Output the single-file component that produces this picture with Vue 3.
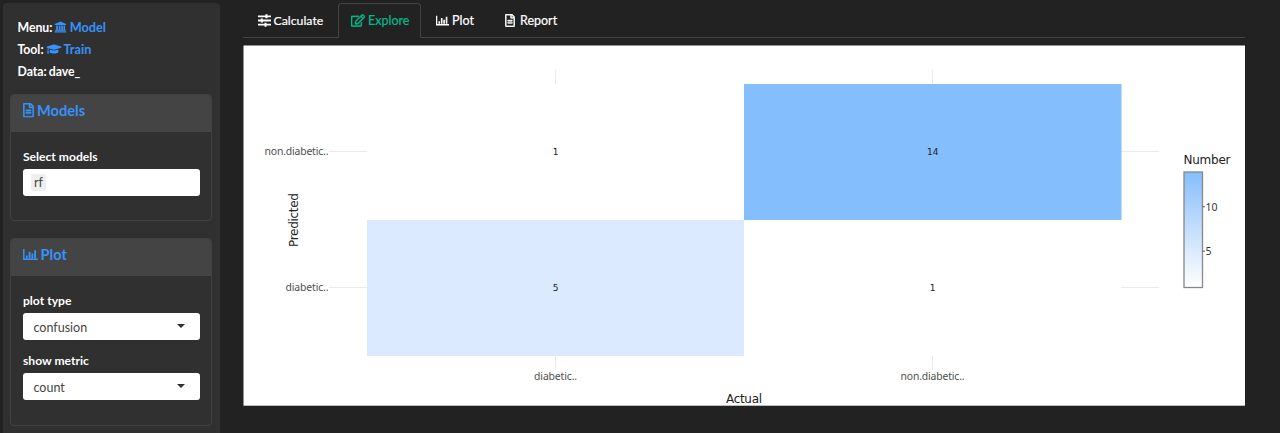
<script setup>
const columns = [
  { label: 'diabetic..', x: 312, width: 43 },
  { label: 'non.diabetic..', x: 689, width: 64 },
]
const rows = [
  { label: 'non.diabetic..', y: 106, width: 64 },
  { label: 'diabetic..', y: 242, width: 43 },
]
const cells = [
  { value: 1, x: 312, y: 109.5 },
  { value: 14, x: 689, y: 109.5 },
  { value: 5, x: 312, y: 245.5 },
  { value: 1, x: 689, y: 245.5 },
]
const selects = [
  { label: 'plot type', value: 'confusion' },
  { label: 'show metric', value: 'count' },
]
</script>

<template>
  <svg class="symbols" width="0" height="0" aria-hidden="true">
    <symbol id="bank" viewBox="0 0 14 14">
      <path d="M7 0.6 13.6 3.4v1.2H.4V3.4zM2 5.2h2v5h1v-5h2v5h.8v-5h2v5h.7v-5h1.8v5h.8v1.2H.8v-1.2H2zM.3 12h13.4v1.5H.3z" />
    </symbol>
    <symbol id="cap" viewBox="0 0 640 512">
      <path d="M622 153 343 67c-15-5-31-5-46 0L18 153c-24 8-24 40 0 47l49 15c-11 13-17 29-18 47-10 6-17 16-17 28 0 11 6 21 14 27L20 432c-2 10 5 20 16 20h56c11 0 18-10 16-20L82 317c8-6 14-16 14-27 0-12-6-21-16-27 1-15 9-28 20-37l197 60c9 3 27 6 46 0l279-86c24-7 24-39 0-47zM352 317c-29 9-53 4-65 0l-145-45-14 112c0 35 86 64 192 64s192-29 192-64l-14-112z" />
    </symbol>
    <symbol id="file" viewBox="0 0 384 512">
      <path d="M288 248v28c0 7-5 12-12 12H108c-7 0-12-5-12-12v-28c0-7 5-12 12-12h168c7 0 12 5 12 12zm-12 72H108c-7 0-12 5-12 12v28c0 7 5 12 12 12h168c7 0 12-5 12-12v-28c0-7-5-12-12-12zm108-188v332c0 27-21 48-48 48H48c-27 0-48-21-48-48V48C0 21 21 0 48 0h204c13 0 25 5 34 14l84 84c9 9 14 21 14 34zm-128-80v76h76zm80 412V176H232c-13 0-24-11-24-24V48H48v416z" stroke="currentColor" stroke-width="14" />
    </symbol>
    <symbol id="bars" viewBox="0 0 16 14">
      <path d="M0 1h1.6v10.4H16V13H0zM3 8h2v3H3zM6 4h2v7H6zM9 6h2v5H9zM12 2.5h2V11h-2z" />
    </symbol>
    <symbol id="edit" viewBox="0 0 576 512">
      <path d="m402 346 32-32c5-5 14-2 14 5v145c0 27-21 48-48 48H48c-27 0-48-21-48-48V112c0-27 21-48 48-48h274c7 0 10 8 6 14l-32 32c-2 1-4 2-6 2H48v352h352V351c0-2 1-4 2-5zM559 143 296 406l-90 10c-26 3-49-19-46-46l10-90L433 17c23-23 60-23 83 0l43 43c23 23 23 60 0 83zM460 174l-58-58-186 186-8 66 66-8zm65-80-43-43c-4-4-11-4-15 0l-31 31 58 58 31-31c4-4 4-11 0-15z" stroke="currentColor" stroke-width="14" />
    </symbol>
    <symbol id="sliders" viewBox="0 0 14 14">
      <path d="M0 1.5h8V.3h2.2v1.2H14v2h-3.8v1.2H8V3.5H0zM0 6h3V4.8h2.2V6H14v2H5.2v1.2H3V8H0zM0 10.5h7V9.3h2.2v1.2H14v2H9.2v1.2H7v-1.2H0z" />
    </symbol>
  </svg>

  <div class="app">
    <aside class="sidebar">
      <div class="info">
        <div>Menu: <a><svg class="i-bank"><use href="#bank" /></svg> Model</a></div>
        <div>Tool: <a><svg class="i-cap"><use href="#cap" /></svg> Train</a></div>
        <div>Data: dave_</div>
      </div>
      <section class="panel models">
        <h4><svg class="i-file"><use href="#file" /></svg>Models</h4>
        <div class="panel-body">
          <label>Select models</label>
          <div class="field multi"><span class="tag">rf</span></div>
        </div>
      </section>
      <section class="panel plot">
        <h4><svg class="i-bars"><use href="#bars" /></svg>Plot</h4>
        <div class="panel-body">
          <template v-for="s in selects" :key="s.label">
            <label>{{ s.label }}</label>
            <div class="field"><span>{{ s.value }}</span><i class="caret" /></div>
          </template>
        </div>
      </section>
    </aside>

    <main>
      <nav class="tabs">
        <a class="tab calc"><svg><use href="#sliders" /></svg>Calculate</a>
        <a class="tab active"><svg><use href="#edit" /></svg>Explore</a>
        <a class="tab plot-tab"><svg><use href="#bars" /></svg>Plot</a>
        <a class="tab report"><svg><use href="#file" /></svg>Report</a>
      </nav>
      <svg class="chart" width="1002" height="361" viewBox="0 0 1002 361">
        <defs>
          <linearGradient id="scale" x1="0" y1="0" x2="0" y2="1">
            <stop offset="0" stop-color="#85befc" />
            <stop offset="0.5" stop-color="#c5defd" />
            <stop offset="1" stop-color="#ffffff" />
          </linearGradient>
        </defs>
        <rect x="0.5" y="0.5" width="1001.5" height="360.2" fill="#fff" />
        <path class="grid" d="M312.5 25v14M312.5 311v14M689.5 25v14M689.5 311v14M86 106.5h38M878 106.5h38M86 242.5h38M878 242.5h38" />
        <rect x="124" y="175" width="377" height="136" fill="#dbeafe" />
        <rect x="501" y="39" width="377.5" height="136" fill="#85befc" />
        <text v-for="(c, i) in cells" :key="i" class="value" :x="c.x + 0.7" :y="c.y">{{ c.value }}</text>
        <text v-for="r in rows" :key="r.label" class="tick end" x="85.5" :y="r.y + 4.4" :textLength="r.width">{{ r.label }}</text>
        <text v-for="c in columns" :key="c.label" class="tick" :x="c.x + 0.6" y="335.4" :textLength="c.width">{{ c.label }}</text>
        <text class="title" x="501" y="358" textLength="36">Actual</text>
        <text class="title" transform="translate(55 175) rotate(-90)" textLength="54">Predicted</text>
        <text class="title start" x="940.5" y="119" textLength="47">Number</text>
        <rect x="941" y="127" width="18.5" height="115.5" fill="url(#scale)" stroke="#888" stroke-width="1.3" />
        <path class="marks" d="M959.5 161.7h2.5M959.5 206.2h2.5" />
        <text class="scale-label" x="962.5" y="165.6">10</text>
        <text class="scale-label" x="962.5" y="210">5</text>
      </svg>
    </main>
  </div>
</template>

<style>
body { background: #222; overflow: hidden; }
</style>

<style scoped>
* { box-sizing: border-box; }
.symbols { position: absolute; }
.app {
  display: flex;
  height: 433px;
  font: 12.5px/22px Lato, sans-serif;
  color: #fff;
  background: #222;
}
svg { fill: currentColor; }
.sidebar {
  width: 217px;
  height: 440px;
  flex: none;
  margin: 3px 0 0 3px;
  padding: 13px 7px 0;
  background: #303030;
  border-radius: 4px;
}
.info { height: 78px; padding-left: 7.5px; font-size: 12.3px; font-weight: 700; word-spacing: -0.8px; letter-spacing: -0.05px; }
.info div { height: 22px; line-height: 23px; }
.info a { color: #3792fb; font-size: 12.7px; line-height: 1; letter-spacing: 0; }
.info svg { vertical-align: -1px; }
.i-bank { width: 13px; height: 12px; }
.i-cap { width: 16px; height: 12px; }
.panel { width: 202px; border: 1px solid #414141; border-radius: 4px; }
.models { height: 127px; }
.plot { height: 188px; margin-top: 17px; }
h4 {
  display: flex;
  align-items: center;
  height: 37px;
  margin: 0;
  padding: 0 0 6px 12px;
  background: #444;
  border-radius: 3px 3px 0 0;
  color: #3792fb;
  font-size: 14.6px;
  font-weight: 700;
}
.i-file { width: 11px; height: 14.5px; margin-right: 3px; }
.i-bars { width: 15px; height: 13px; margin-right: 2.5px; }
.panel-body { padding: 16px 12px 0; }
label { display: block; height: 21px; line-height: 18px; font-size: 12.1px; font-weight: 700; }
.field {
  display: flex;
  align-items: center;
  justify-content: space-between;
  width: 176.5px;
  height: 27px;
  margin-bottom: 12.4px;
  padding: 2px 14.5px 0 10.5px;
  background: #fff;
  border-radius: 3px;
  color: #464545;
}
.multi { padding: 0 8px; }
.tag { padding: 0 3px; height: 17px; line-height: 18px; background: #efefef; border-radius: 2px; }
.caret { border: 4px solid transparent; border-top-color: #303030; border-bottom: 0; margin-top: -3px; }
main { margin-left: 23px; padding-top: 3px; }
.tabs { display: flex; width: 1002px; height: 35px; border-bottom: 1px solid #444; -webkit-text-stroke: 0.2px currentColor; }
.tab { display: flex; align-items: center; height: 35px; padding: 0 14px; border: 1px solid transparent; }
.tab svg { width: 13px; height: 13px; margin-right: 3px; flex: none; }
.calc { width: 95px; padding: 0 0 0 13.5px; font-size: 12.3px; }
.active {
  width: 83px;
  padding: 0 0 0 12px;
  color: #00bc8c;
  background: #222;
  border-color: #444;
  border-bottom-color: #222;
  border-radius: 4px 4px 0 0;
}
.active svg { width: 14px; }
.plot-tab { width: 69px; padding-right: 0; }
.report svg { width: 10px; margin-right: 5px; }
.chart { display: block; margin-top: 7px; }
.chart text { font-family: "Noto Sans", "Open Sans", sans-serif; text-anchor: middle; }
.grid { stroke: #ebebeb; }
.marks { stroke: #555; }
.chart .tick { font-size: 10.4px; fill: #4d4d4d; }
.chart .end { text-anchor: end; }
.chart .title { font: 12px "DejaVu Sans", sans-serif; fill: #222; }
.chart .value { font: 9px "DejaVu Sans", sans-serif; fill: #222; }
.chart .start, .chart .scale-label { text-anchor: start; }
.chart .scale-label { font-size: 10.5px; fill: #333; }
</style>
